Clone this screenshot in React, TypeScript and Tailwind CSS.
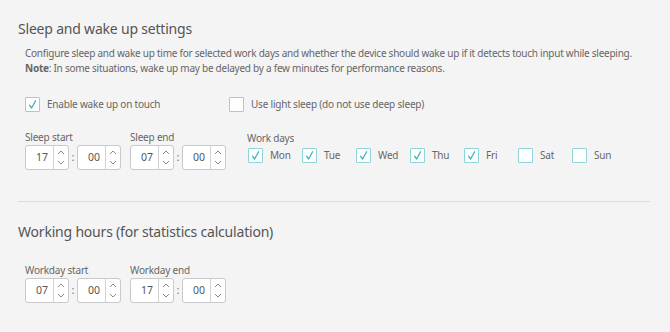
import React from "react";

const Check = ({ checked, label, className = "" }: { checked: boolean; label: string; className?: string }) => (
  <div className={`flex items-center ${className}`}>
    <div className="flex h-[15px] w-[15px] items-center justify-center rounded-[1px] border-[1.5px] border-[#8dd5d8] bg-white">
      {checked && (
        <svg width="11" height="11" viewBox="0 0 11 11" fill="none">
          <path d="M2.6 6.2 L4.6 9 L8.6 1.8" stroke="#3db3b9" strokeWidth="1.3" strokeLinecap="round" strokeLinejoin="round" />
        </svg>
      )}
    </div>
    <span className="ml-[7px] text-[10px] tracking-[-0.2px] text-[#666]">{label}</span>
  </div>
);

const Spin = ({ value }: { value: string }) => (
  <div className="flex h-[25px] w-[44px] rounded-[3px] border border-[#c9c9c9] bg-white">
    <div className="flex flex-1 items-center justify-end pr-[5px] text-[10.5px] text-[#555]">{value}</div>
    <div className="flex w-[15px] flex-col items-center justify-center gap-[5px] border-l border-[#d2d2d2]">
      <svg width="8" height="5" viewBox="0 0 8 5" fill="none">
        <path d="M1 4 L4 1 L7 4" stroke="#8a8a8a" strokeWidth="1" />
      </svg>
      <svg width="8" height="5" viewBox="0 0 8 5" fill="none">
        <path d="M1 1 L4 4 L7 1" stroke="#8a8a8a" strokeWidth="1" />
      </svg>
    </div>
  </div>
);

const TimeField = ({ label, h, m, className = "" }: { label: string; h: string; m: string; className?: string }) => (
  <div className={className}>
    <div className="text-[10px] leading-[14px] tracking-[-0.2px] text-[#666]">{label}</div>
    <div className="mt-[1px] flex items-center">
      <Spin value={h} />
      <span className="w-[8px] text-center text-[11px] text-[#777]">:</span>
      <Spin value={m} />
    </div>
  </div>
);

const days = [
  { d: "Mon", on: true },
  { d: "Tue", on: true },
  { d: "Wed", on: true },
  { d: "Thu", on: true },
  { d: "Fri", on: true },
  { d: "Sat", on: false },
  { d: "Sun", on: false },
];

export default function App() {
  return (
    <div className="h-[332px] w-[670px] bg-[#f4f4f4] px-[18px] pt-[18px]" style={{ fontFamily: '"Noto Sans", sans-serif' }}>
      <h2 className="text-[14px] leading-[22px] tracking-[-0.2px] text-[#555]">Sleep and wake up settings</h2>
      <div className="ml-[7px] mt-[6px] text-[10px] leading-[15px] tracking-[-0.25px] text-[#666]">
        <p>
          Configure sleep and wake up time for selected work days and whether the device should wake up if it detects touch input while sleeping.
        </p>
        <p>
          <b className="font-bold">Note</b>: In some situations, wake up may be delayed by a few minutes for performance reasons.
        </p>
      </div>

      <div className="ml-[7px] mt-[21px] flex">
        <Check checked label="Enable wake up on touch" className="w-[204px]" />
        <Check checked={false} label="Use light sleep (do not use deep sleep)" />
      </div>

      <div className="ml-[7px] mt-[18px] flex">
        <TimeField label="Sleep start" h="17" m="00" className="w-[105px]" />
        <TimeField label="Sleep end" h="07" m="00" className="w-[117px]" />
        <div className="pt-[1px]">
          <div className="text-[10px] leading-[14px] tracking-[-0.2px] text-[#666]">Work days</div>
          <div className="ml-[1px] mt-[3px] flex">
            {days.map((x) => (
              <Check key={x.d} checked={x.on} label={x.d} className="w-[54px]" />
            ))}
          </div>
        </div>
      </div>

      <div className="mt-[31px] h-px w-[632px] bg-[#dcdcdc]" />

      <h2 className="mt-[19px] text-[14px] leading-[22px] tracking-[-0.2px] text-[#555]">Working hours (for statistics calculation)</h2>

      <div className="ml-[7px] mt-[20px] flex">
        <TimeField label="Workday start" h="07" m="00" className="w-[105px]" />
        <TimeField label="Workday end" h="17" m="00" className="w-[117px]" />
      </div>
    </div>
  );
}
